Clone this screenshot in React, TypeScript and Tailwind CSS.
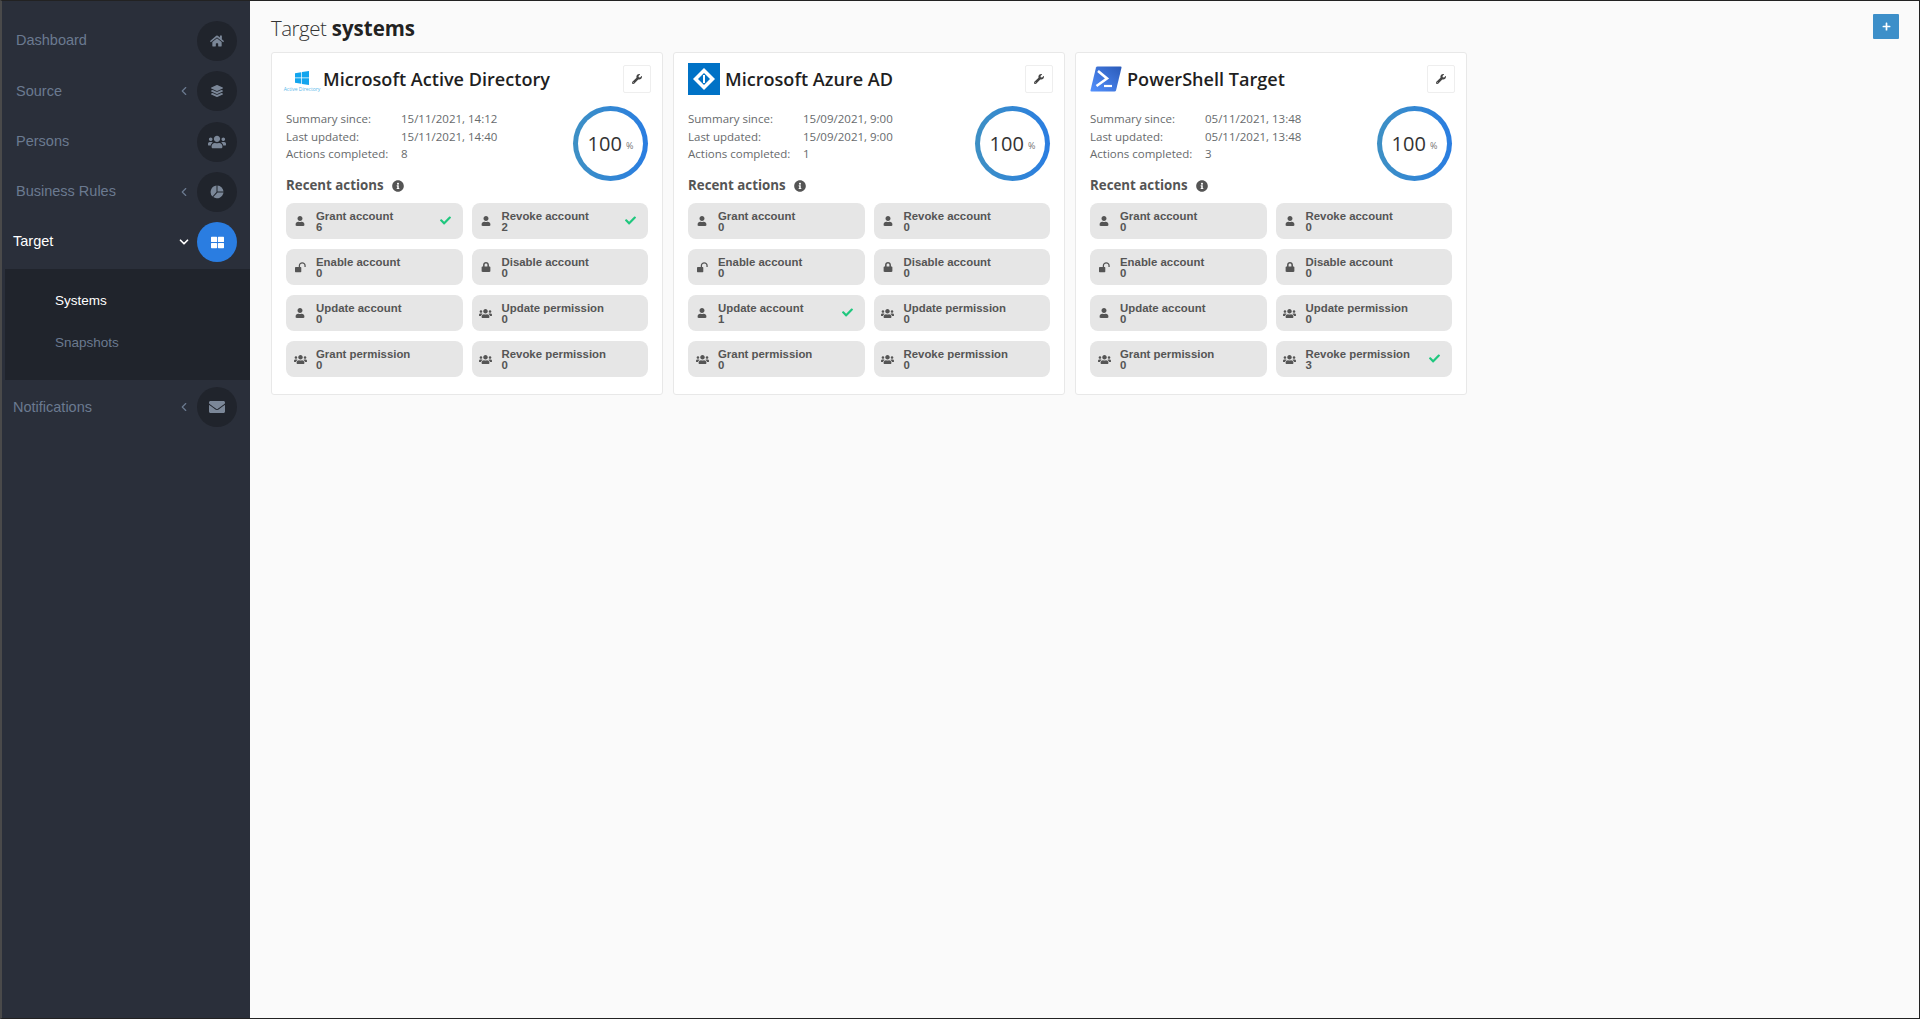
import React from 'react';
import { ChevronDown, ChevronLeft } from 'lucide-react';
import {
  FaCheck,
  FaEnvelope,
  FaHome,
  FaInfoCircle,
  FaLayerGroup,
  FaLock,
  FaPlus,
  FaThLarge,
  FaUser,
  FaUsers,
  FaWrench,
} from 'react-icons/fa';

type IconType = React.ComponentType<{ className?: string }>;

// fa4 style icons that the package draws differently
const PieIcon: IconType = ({ className }) => (
  <svg viewBox="0 0 14 14" width="1em" height="1em" className={className} fill="currentColor">
    <path d="M6.5.5V7L2.5 11.5A6.5 6.5 0 0 1 6.5.5z" />
    <path d="M7.5.5A6.5 6.5 0 0 1 13.5 6.5H7.5z" />
    <path d="M13.5 7.5A6.5 6.5 0 0 1 3.3 12L7.5 7.5z" />
  </svg>
);

const UnlockIcon: IconType = ({ className }) => (
  <svg viewBox="0 0 14 12" width="1em" height="1em" className={className} fill="currentColor">
    <rect x="0" y="5.5" width="8" height="6.5" rx="0.8" />
    <path d="M5.6 5.5V3.6a3.6 3.6 0 0 1 7.2 0V5.4" fill="none" stroke="currentColor" strokeWidth="1.6" />
  </svg>
);

interface NavItemProps {
  label: string;
  icon: IconType;
  iconClass: string;
  chevron?: boolean;
  active?: boolean;
  indent?: boolean;
}

const NavItem: React.FC<NavItemProps> = ({ label, icon: Icon, iconClass, chevron, active, indent }) => {
  return (
    <div className={`flex h-[50.25px] items-center pr-[13px] ${indent ? 'pl-[11px]' : 'pl-[14px]'}`}>
      <span className={`flex-1 text-[14.5px] ${active ? 'text-white' : 'text-[#6b7a90]'}`}>{label}</span>
      {chevron && !active && <ChevronLeft size={14} strokeWidth={2} className="mr-[6px] text-[#6b7a90]" />}
      {chevron && active && <ChevronDown size={14} strokeWidth={3} className="mr-[6px] text-white" />}
      <span
        className={`flex h-[40px] w-[40px] items-center justify-center rounded-full ${
          active ? 'bg-[#2a7de1] text-white' : 'bg-[#20242c] text-[#7b8798]'
        }`}
      >
        <Icon className={iconClass} />
      </span>
    </div>
  );
};

const Sidebar: React.FC = () => {
  return (
    <aside className="w-[248px] shrink-0 bg-[#2a2f3a] pt-[15px] font-['Liberation_Sans',sans-serif]">
      <NavItem label="Dashboard" icon={FaHome} iconClass="text-[14px]" />
      <NavItem label="Source" icon={FaLayerGroup} iconClass="text-[12px]" chevron />
      <NavItem label="Persons" icon={FaUsers} iconClass="text-[18px]" />
      <NavItem label="Business Rules" icon={PieIcon} iconClass="text-[14px]" chevron />
      <NavItem label="Target" icon={FaThLarge} iconClass="text-[13px]" chevron active indent />
      <div className="ml-[3px] mt-[2px] flex h-[111px] flex-col bg-[#20242c] pl-[50px] pt-[21px] text-[13.5px]">
        <div className="flex h-[21px] items-center text-white">Systems</div>
        <div className="mt-[21px] flex h-[21px] items-center text-[#6b7a90]">Snapshots</div>
      </div>
      <div className="pt-[2px]">
        <NavItem label="Notifications" icon={FaEnvelope} iconClass="text-[16px]" chevron indent />
      </div>
    </aside>
  );
};

interface ActionData {
  label: string;
  count: number;
  icon: IconType;
  iconClass: string;
}

const ActionTile: React.FC<ActionData> = ({ label, count, icon: Icon, iconClass }) => {
  return (
    <div className="flex h-[36px] items-center rounded-[8px] bg-[#e6e6e6] pl-[4px] pr-[12px] font-['Liberation_Sans',sans-serif] text-[11.4px] font-bold text-[#555555]">
      <span className="mt-[1px] flex w-[20px] justify-center">
        <Icon className={iconClass} />
      </span>
      <div className="ml-[6px] mt-[2px] flex-1 leading-[11px]">
        <div>{label}</div>
        <div>{count}</div>
      </div>
      {count > 0 && <FaCheck className="text-[11px] text-[#1fc77e]" />}
    </div>
  );
};

const AdLogo: React.FC = () => (
  <div className="flex h-[32px] w-[32px] flex-col items-center justify-end pb-[3px]">
    <svg width="14" height="14" viewBox="0 0 14 14" className="mb-[1px]">
      <path d="M0 2.2 6.3 1.2V6.6H0zM7 1.1 14 0V6.6H7zM0 7.3H6.3V12.8L0 11.8zM7 7.3H14V14L7 12.9z" fill="#12a5ee" />
    </svg>
    <span className="whitespace-nowrap text-[5px] leading-[6px] text-[#56b7ea]">Active Directory</span>
  </div>
);

const AzureLogo: React.FC = () => (
  <svg width="32" height="32" viewBox="0 0 32 32">
    <rect width="32" height="32" fill="#0072c6" />
    <path d="M16 5 27 16 16 27 5 16z" fill="#ffffff" />
    <path d="M16 10 22 16 16 22 10 16z" fill="#0072c6" />
    <path d="M15 12h2v8h-2z" fill="#ffffff" />
  </svg>
);

const PowerShellLogo: React.FC = () => (
  <svg width="32" height="26" viewBox="0 0 32 26">
    <defs>
      <linearGradient id="ps" x1="0" y1="1" x2="1" y2="0">
        <stop offset="0" stopColor="#5391fe" />
        <stop offset="1" stopColor="#2a5ab8" />
      </linearGradient>
    </defs>
    <path d="M6 1.5Q6.3 .5 7.5 .5H30.5Q31.8 .5 31.5 1.8L26 24.5Q25.7 25.5 24.5 25.5H1.5Q.2 25.5 .5 24.2z" fill="url(#ps)" />
    <path d="M8 5 17 12.5 6.5 20" fill="none" stroke="#ffffff" strokeWidth="2.6" />
    <path d="M14 20H22" fill="none" stroke="#ffffff" strokeWidth="2.2" />
  </svg>
);

interface SystemData {
  name: string;
  logo: React.ReactNode;
  since: string;
  updated: string;
  completed: number;
  counts: number[];
}

const actionDefs: { label: string; icon: IconType; iconClass: string }[] = [
  { label: 'Grant account', icon: FaUser, iconClass: 'text-[10px]' },
  { label: 'Revoke account', icon: FaUser, iconClass: 'text-[10px]' },
  { label: 'Enable account', icon: UnlockIcon, iconClass: 'text-[11px]' },
  { label: 'Disable account', icon: FaLock, iconClass: 'text-[10px]' },
  { label: 'Update account', icon: FaUser, iconClass: 'text-[10px]' },
  { label: 'Update permission', icon: FaUsers, iconClass: 'text-[13px]' },
  { label: 'Grant permission', icon: FaUsers, iconClass: 'text-[13px]' },
  { label: 'Revoke permission', icon: FaUsers, iconClass: 'text-[13px]' },
];

const systems: SystemData[] = [
  {
    name: 'Microsoft Active Directory',
    logo: <AdLogo />,
    since: '15/11/2021, 14:12',
    updated: '15/11/2021, 14:40',
    completed: 8,
    counts: [6, 2, 0, 0, 0, 0, 0, 0],
  },
  {
    name: 'Microsoft Azure AD',
    logo: <AzureLogo />,
    since: '15/09/2021, 9:00',
    updated: '15/09/2021, 9:00',
    completed: 1,
    counts: [0, 0, 0, 0, 1, 0, 0, 0],
  },
  {
    name: 'PowerShell Target',
    logo: <PowerShellLogo />,
    since: '05/11/2021, 13:48',
    updated: '05/11/2021, 13:48',
    completed: 3,
    counts: [0, 0, 0, 0, 0, 0, 0, 3],
  },
];

const SystemCard: React.FC<{ system: SystemData }> = ({ system }) => {
  return (
    <div className="h-[343px] w-[392px] rounded-[3px] border border-[#e8e8e8] bg-white px-[14px] pt-[10px]">
      <div className="flex h-[32px] items-center">
        <div className="flex w-[32px] justify-center">{system.logo}</div>
        <h2 className="ml-[5px] flex-1 pt-[2px] text-[18.1px] font-semibold text-[#1f1f1f]">{system.name}</h2>
        <button className="mr-[-3px] flex h-[28px] w-[28px] items-center justify-center rounded-[2px] border border-[#eeeeee] bg-white text-[#444444]">
          <FaWrench className="text-[10px]" />
        </button>
      </div>
      <div className="relative mt-[15px] h-[66px]">
        <div className="grid grid-cols-[115px_1fr] text-[11.5px] leading-[17.5px] text-[#676a6c]">
          <span>Summary since:</span>
          <span>{system.since}</span>
          <span>Last updated:</span>
          <span>{system.updated}</span>
          <span>Actions completed:</span>
          <span>{system.completed}</span>
        </div>
        <div className="absolute right-[0px] top-[-4px] h-[75px] w-[75px] rounded-full bg-linear-to-r from-[#3e90c4] to-[#2a7de1] p-[5px]">
          <div className="flex h-full w-full items-center justify-center rounded-full bg-white text-[#333333]">
            <span className="text-[20px]">100</span>
            <span className="ml-[4px] mt-[4px] text-[9px] text-[#777777]">%</span>
          </div>
        </div>
      </div>
      <div className="flex items-center text-[13.3px] font-bold text-[#555555]">
        Recent actions
        <FaInfoCircle className="ml-[8px] text-[12px]" />
      </div>
      <div className="mt-[7px] grid grid-cols-2 gap-x-[9px] gap-y-[10px]">
        {actionDefs.map((action, i) => (
          <ActionTile
            key={action.label}
            label={action.label}
            icon={action.icon}
            iconClass={action.iconClass}
            count={system.counts[i]}
          />
        ))}
      </div>
    </div>
  );
};

const App: React.FC = () => {
  return (
    <div className="flex h-[1019px] w-[1920px] overflow-hidden border border-[#222222] border-l-[2px] border-l-[#4a4a4a] bg-[#fafafa] font-['Open_Sans',sans-serif]">
      <Sidebar />
      <main className="flex-1 pl-[21px] pr-[20px] pt-[11px]">
        <div className="flex h-[40px] items-start justify-between">
          <h1 className="text-[20.5px] font-light leading-[32px] text-[#333333]">
            <span className="tracking-[-0.5px]">Target</span>{' '}
            <span className="font-bold text-[#222222]">systems</span>
          </h1>
          <button className="mt-[2px] flex h-[25px] w-[26px] items-center justify-center rounded-[1px] bg-[#3d8fc9] text-white">
            <FaPlus className="text-[9px]" />
          </button>
        </div>
        <div className="flex gap-[10px]">
          {systems.map(system => (
            <SystemCard key={system.name} system={system} />
          ))}
        </div>
      </main>
    </div>
  );
};

export default App;
